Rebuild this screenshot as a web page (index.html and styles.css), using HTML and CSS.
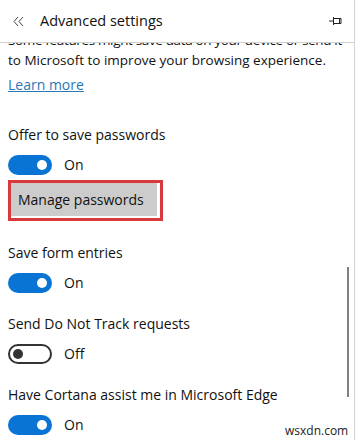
FILE: index.html
```html
<!DOCTYPE html>
<html>
<head>
<meta charset="utf-8">
<link rel="stylesheet" href="styles.css">
</head>
<body>
<div class="panel">
  <header class="header">
    <svg class="back" width="11" height="11" viewBox="0 0 11 11"><path d="M5 1 L1 5.5 L5 10 M10 1 L6 5.5 L10 10" fill="none" stroke="#444" stroke-width="1"/></svg>
    <h1 class="title">Advanced settings</h1>
    <svg class="pin" width="13" height="10" viewBox="0 0 13 10"><path d="M0 5 H4 M4.5 1 V9 M4.5 2.5 H12 V7.5 H4.5 M10.5 2.5 V7.5" fill="none" stroke="#222" stroke-width="1"/></svg>
  </header>
  <main class="content">
    <p class="intro"><span class="tight">Some features might save data on your device or send it</span><br>to Microsoft to improve your browsing experience.</p>
    <a class="link" href="#">Learn more</a>

    <section class="setting first">
      <div class="label">Offer to save passwords</div>
      <div class="row"><span class="toggle on"><span class="knob"></span></span><span class="state">On</span></div>
      <div class="highlight"><button class="btn">Manage passwords</button></div>
    </section>

    <section class="setting after-btn">
      <div class="label">Save form entries</div>
      <div class="row"><span class="toggle on"><span class="knob"></span></span><span class="state">On</span></div>
    </section>

    <section class="setting">
      <div class="label">Send Do Not Track requests</div>
      <div class="row"><span class="toggle off"><span class="knob"></span></span><span class="state">Off</span></div>
    </section>

    <section class="setting">
      <div class="label">Have Cortana assist me in Microsoft Edge</div>
      <div class="row"><span class="toggle on"><span class="knob"></span></span><span class="state">On</span></div>
    </section>
  </main>
  <div class="scrollbar"></div>
  <div class="watermark">wsxdn.com</div>
</div>
</body>
</html>
```
FILE: styles.css
```css
html, body {
  margin: 0;
  padding: 0;
  background: #fff;
}
body {
  width: 357px;
  height: 440px;
  overflow: hidden;
  font-family: "Open Sans", "Noto Sans", sans-serif;
  font-size: 14px;
  color: #111;
}
.panel {
  position: relative;
  width: 354px;
  height: 440px;
  border-right: 1px solid #d4d4d4;
  display: flex;
  flex-direction: column;
  overflow: hidden;
}
.header {
  height: 42px;
  flex: none;
  border-bottom: 1px solid #cfcfcf;
  display: flex;
  align-items: center;
  padding: 0 12px 0 13px;
  position: relative;
  z-index: 1;
  background: #fff;
}
.back {
  flex: none;
  margin-top: 1px;
}
.title {
  margin: 0 0 0 16px;
  font-size: 14.5px;
  font-weight: 400;
  color: #111;
  flex: 1;
  line-height: 20px;
}
.pin {
  flex: none;
}
.content {
  flex: 1;
  padding: 0 8px;
  overflow: hidden;
}
.intro {
  margin: -13px 0 0;
  line-height: 20px;
  font-size: 13.5px;
  white-space: nowrap;
}
.tight {
  letter-spacing: -0.35px;
}
.link {
  display: block;
  width: fit-content;
  margin-top: 5px;
  line-height: 20px;
  color: #2b78b3;
  text-decoration: underline;
}
.setting {
  margin-top: 21px;
}
.setting.first {
  margin-top: 30px;
}
.setting.after-btn {
  margin-top: 22px;
}
.label {
  line-height: 20px;
}
.row {
  display: flex;
  align-items: center;
  margin-top: 10px;
  height: 20px;
}
.toggle {
  box-sizing: border-box;
  width: 44px;
  height: 20px;
  border-radius: 10px;
  display: flex;
  align-items: center;
  padding: 0 5px;
}
.toggle.on {
  background: #0a74d4;
  justify-content: flex-end;
}
.toggle.off {
  border: 2px solid #333;
  justify-content: flex-start;
  padding: 0 3px;
}
.knob {
  width: 10px;
  height: 10px;
  border-radius: 50%;
  background: #fff;
}
.toggle.off .knob {
  background: #333;
}
.state {
  margin-left: 12px;
  line-height: 20px;
}
.highlight {
  margin-top: 5px;
  width: 146px;
  height: 33px;
  border: 3px solid #d8393c;
  padding: 0 3px 2px 0;
  box-sizing: content-box;
}
.btn {
  display: block;
  width: 146px;
  height: 33px;
  margin: 0;
  border: none;
  background: #cccccc;
  font-family: inherit;
  font-size: 14px;
  color: #111;
  text-align: left;
  padding: 0 7px;
}
.scrollbar {
  position: absolute;
  left: 347px;
  top: 267px;
  width: 2px;
  height: 130px;
  background: #808080;
}
.watermark {
  position: absolute;
  left: 283px;
  top: 424px;
  font-size: 12px;
  line-height: 14px;
  color: #222;
  background: #fff;
  padding: 0 2px;
}
```
